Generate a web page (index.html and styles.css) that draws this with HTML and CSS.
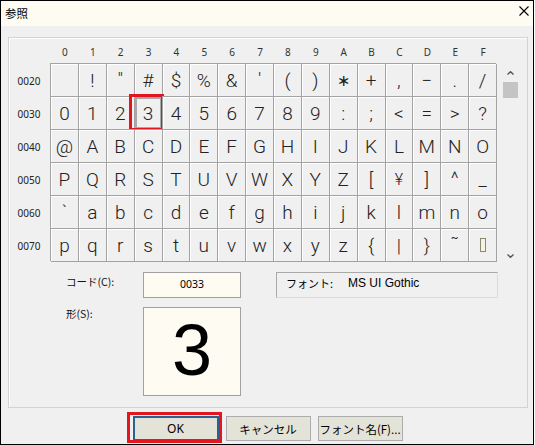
FILE: index.html
```html
<!DOCTYPE html>
<html lang="ja">
<head>
<meta charset="utf-8">
<title>参照</title>
<link rel="stylesheet" href="styles.css">
</head>
<body>
<div class="window">
  <div class="titlebar">
    <span class="title">参照</span>
    <svg class="close" width="10" height="10" viewBox="0 0 10 10"><path d="M0.5 0.5L9.5 9.5M9.5 0.5L0.5 9.5" stroke="#000" stroke-width="1.1" fill="none"/></svg>
  </div>
  <div class="content">
    <div class="panel">
      <div class="charmap">
        <div class="corner"></div>
        <div class="colhead">0</div><div class="colhead">1</div><div class="colhead">2</div><div class="colhead">3</div>
        <div class="colhead">4</div><div class="colhead">5</div><div class="colhead">6</div><div class="colhead">7</div>
        <div class="colhead">8</div><div class="colhead">9</div><div class="colhead">A</div><div class="colhead">B</div>
        <div class="colhead">C</div><div class="colhead">D</div><div class="colhead">E</div><div class="colhead">F</div>
        <div class="corner"></div>

        <div class="scrollbar">
          <svg class="chev" width="7" height="4" viewBox="0 0 7 4"><path d="M0.5 3.5L3.5 0.7L6.5 3.5" stroke="#555" stroke-width="1.4" fill="none"/></svg>
          <div class="thumb"></div>
          <div class="spacer"></div>
          <svg class="chev" width="7" height="4" viewBox="0 0 7 4"><path d="M0.5 0.5L3.5 3.3L6.5 0.5" stroke="#555" stroke-width="1.4" fill="none"/></svg>
        </div>

        <div class="rowhead">0020</div>
        <div class="cell"></div><div class="cell">!</div><div class="cell hi">″</div><div class="cell">#</div>
        <div class="cell">$</div><div class="cell">%</div><div class="cell">&amp;</div><div class="cell hi">′</div>
        <div class="cell">(</div><div class="cell">)</div><div class="cell small">∗</div><div class="cell">+</div>
        <div class="cell">,</div><div class="cell">−</div><div class="cell">.</div><div class="cell">/</div>

        <div class="rowhead">0030</div>
        <div class="cell">0</div><div class="cell">1</div><div class="cell">2</div><div class="cell sel">3<span class="mark"></span></div>
        <div class="cell">4</div><div class="cell">5</div><div class="cell">6</div><div class="cell">7</div>
        <div class="cell">8</div><div class="cell">9</div><div class="cell">:</div><div class="cell">;</div>
        <div class="cell">&lt;</div><div class="cell">=</div><div class="cell">&gt;</div><div class="cell">?</div>

        <div class="rowhead">0040</div>
        <div class="cell">@</div><div class="cell">A</div><div class="cell">B</div><div class="cell">C</div>
        <div class="cell">D</div><div class="cell">E</div><div class="cell">F</div><div class="cell">G</div>
        <div class="cell">H</div><div class="cell">I</div><div class="cell">J</div><div class="cell">K</div>
        <div class="cell">L</div><div class="cell">M</div><div class="cell">N</div><div class="cell">O</div>

        <div class="rowhead">0050</div>
        <div class="cell">P</div><div class="cell">Q</div><div class="cell">R</div><div class="cell">S</div>
        <div class="cell">T</div><div class="cell">U</div><div class="cell">V</div><div class="cell">W</div>
        <div class="cell">X</div><div class="cell">Y</div><div class="cell">Z</div><div class="cell">[</div>
        <div class="cell small">¥</div><div class="cell">]</div><div class="cell hi">^</div><div class="cell">_</div>

        <div class="rowhead">0060</div>
        <div class="cell hi">`</div><div class="cell">a</div><div class="cell">b</div><div class="cell">c</div>
        <div class="cell">d</div><div class="cell">e</div><div class="cell">f</div><div class="cell">g</div>
        <div class="cell">h</div><div class="cell">i</div><div class="cell">j</div><div class="cell">k</div>
        <div class="cell">l</div><div class="cell">m</div><div class="cell">n</div><div class="cell">o</div>

        <div class="rowhead">0070</div>
        <div class="cell">p</div><div class="cell">q</div><div class="cell">r</div><div class="cell">s</div>
        <div class="cell">t</div><div class="cell">u</div><div class="cell">v</div><div class="cell">w</div>
        <div class="cell">x</div><div class="cell">y</div><div class="cell">z</div><div class="cell">{</div>
        <div class="cell">|</div><div class="cell">}</div><div class="cell hi">˜</div><div class="cell"><span class="del"></span></div>
      </div>

      <div class="form">
        <div class="label code-label">コード(C):</div>
        <div class="codebox">0033</div>
        <div class="fontbox"><span class="fontkey">フォント:</span><span class="fontname">MS UI Gothic</span></div>
        <div class="label shape-label">形(S):</div>
        <div class="preview">3</div>
      </div>
    </div>

    <div class="buttons">
      <button class="btn default">OK<span class="mark"></span></button>
      <button class="btn">キャンセル</button>
      <button class="btn wide">フォント名(F)...</button>
    </div>
  </div>
</div>
</body>
</html>
```

FILE: styles.css
```css
html, body {
  margin: 0;
  padding: 0;
  background: #ffffff;
}

.window {
  width: 534px;
  height: 445px;
  box-sizing: border-box;
  border: 1px solid #000;
  background: #f0f0f0;
  display: flex;
  flex-direction: column;
  font-family: "Noto Sans", "Noto Sans CJK JP", sans-serif;
  color: #000;
}

.titlebar {
  height: 25px;
  background: #fdfbf2;
  display: flex;
  justify-content: space-between;
  align-items: flex-start;
  padding: 0 4px 0 4px;
}

.title {
  font-family: "Noto Sans CJK JP", sans-serif;
  font-size: 11.5px;
  line-height: 16px;
  margin-top: 4px;
}

.close {
  margin-top: 5px;
  display: block;
}

.content {
  flex: 1;
  padding: 11px 5px 0 7px;
  display: flex;
  flex-direction: column;
}

.panel {
  border: 1px solid #d3d3d3;
  box-shadow: inset 1px 1px 0 #fff;
  padding: 7px 0 11px 0;
}

.charmap {
  display: grid;
  grid-template-columns: 42px repeat(16, 27.875px) 1fr;
  grid-template-rows: 19px repeat(6, 33px);
}

.colhead {
  font-family: "Noto Sans", sans-serif;
  font-size: 10px;
  line-height: 14px;
  color: #333;
  text-align: center;
}

.rowhead {
  font-family: "Noto Sans", sans-serif;
  font-size: 10px;
  color: #222;
  display: flex;
  align-items: center;
  justify-content: center;
  padding-right: 2px;
}

.cell {
  position: relative;
  border-right: 1px solid #a3a3a3;
  border-bottom: 1px solid #a3a3a3;
  box-shadow: inset 1px 1px 0 #fff, -1px -1px 0 #a3a3a3;
  display: flex;
  align-items: center;
  justify-content: center;
  font-family: "Roboto", "Liberation Sans", sans-serif;
  font-weight: 300;
  font-size: 19px;
  color: #222;
}

.cell.small {
  font-size: 16px;
}

.cell.hi {
  align-items: flex-start;
  padding-top: 4px;
}

.cell.sel {
  box-shadow: inset 0 0 0 2px #a8a8a8, -1px -1px 0 #a3a3a3;
}

.mark {
  position: absolute;
  border: 3px solid #e3151e;
  pointer-events: none;
}

.cell.sel .mark {
  left: -6px;
  top: -3px;
  right: -2px;
  bottom: -2px;
}

.del {
  display: inline-block;
  width: 4px;
  height: 12px;
  border: 1px solid #8a8a70;
  background: #f6f3e4;
}

.scrollbar {
  grid-column: 18;
  grid-row: 2 / 8;
  display: flex;
  flex-direction: column;
  align-items: center;
  width: 15px;
  padding: 7px 0 4px 6px;
}

.chev {
  display: block;
}

.thumb {
  width: 15px;
  height: 16px;
  background: #c4c4c4;
  margin-top: 7px;
}

.spacer {
  flex: 1;
}

.form {
  display: grid;
  grid-template-columns: 77px 98px 35px 222px;
  grid-template-rows: 26px 89px;
  grid-template-areas:
    "clabel cbox . fbox"
    "slabel pbox . .";
  row-gap: 9px;
  margin: 10px 0 0 57px;
}

.label {
  font-family: "Noto Sans CJK JP", sans-serif;
  font-size: 10.5px;
  line-height: 14px;
  color: #111;
}

.code-label {
  grid-area: clabel;
  padding-top: 3px;
}

.shape-label {
  grid-area: slabel;
}

.codebox {
  grid-area: cbox;
  box-sizing: border-box;
  border: 1px solid #a0a0a0;
  background: #fdfbf2;
  font-family: "Noto Sans", sans-serif;
  font-size: 10.5px;
  display: flex;
  align-items: center;
  justify-content: center;
  padding-bottom: 2px;
}

.fontbox {
  grid-area: fbox;
  box-sizing: border-box;
  border: 1px solid;
  border-color: #a9a9a9 #dcdcdc #dcdcdc #a9a9a9;
  display: flex;
  align-items: flex-start;
  padding: 3px 0 0 9px;
  font-size: 11px;
}

.fontkey {
  font-family: "Noto Sans CJK JP", sans-serif;
  width: 62px;
  line-height: 14px;
}

.fontname {
  font-family: "Liberation Sans", sans-serif;
  font-size: 12px;
  line-height: 14px;
}

.preview {
  grid-area: pbox;
  box-sizing: border-box;
  border: 1px solid #a0a0a0;
  background: #fdfbf2;
  font-family: "Liberation Sans", sans-serif;
  font-size: 72px;
  line-height: 1;
  display: flex;
  align-items: center;
  justify-content: center;
  padding-bottom: 4px;
}

.buttons {
  display: flex;
  justify-content: center;
  gap: 7px;
  margin-top: 8px;
  padding-right: 1px;
}

.btn {
  position: relative;
  width: 85px;
  height: 25px;
  box-sizing: border-box;
  border: 1px solid #adadad;
  background: #e4e3d8;
  font-family: "Noto Sans CJK JP", sans-serif;
  font-size: 11.5px;
  color: #000;
  padding: 0;
  margin: 0;
}

.btn.default {
  width: 86px;
  border: 2px solid #2a6190;
  font-family: "Noto Sans", sans-serif;
  font-size: 12px;
}

.btn.default .mark {
  left: -8px;
  top: -6px;
  right: -5px;
  bottom: -4px;
}
```
